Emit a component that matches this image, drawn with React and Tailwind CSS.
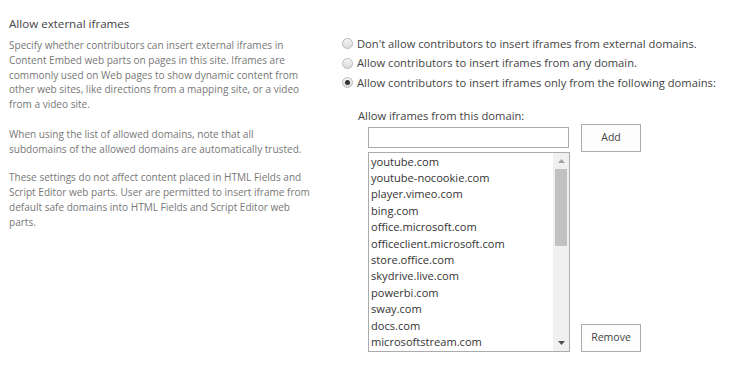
import React from "react";

const domains = [
  "youtube.com",
  "youtube-nocookie.com",
  "player.vimeo.com",
  "bing.com",
  "office.microsoft.com",
  "officeclient.microsoft.com",
  "store.office.com",
  "skydrive.live.com",
  "powerbi.com",
  "sway.com",
  "docs.com",
  "microsoftstream.com",
];

function Radio({ checked, label }) {
  return (
    <div className="flex items-center h-[19.5px]">
      <span className="flex items-center justify-center w-[11px] h-[11px] rounded-full border border-[#b9b9b9] bg-[linear-gradient(#f4f4f4,#dcdcdc)] mr-[4px] shrink-0">
        {checked && <span className="w-[5px] h-[5px] rounded-full bg-[#333]" />}
      </span>
      <span className="text-[#444] text-[11.2px] leading-[16px] whitespace-nowrap">{label}</span>
    </div>
  );
}

export default function App() {
  return (
    <div className="flex w-[735px] h-[383px] bg-white font-['Open_Sans',sans-serif] overflow-hidden">
      <div className="w-[333px] pl-[9px] pt-[15px] shrink-0">
        <div className="text-[#444] text-[11.6px] leading-[18px]">Allow external iframes</div>
        <div className="text-[#777] text-[10.05px] leading-[14.8px] mt-[5px]">
          <p>
            Specify whether contributors can insert external iframes in<br />
            Content Embed web parts on pages in this site. Iframes are<br />
            commonly used on Web pages to show dynamic content from<br />
            other web sites, like directions from a mapping site, or a video<br />
            from a video site.
          </p>
          <p className="mt-[14.8px]">
            When using the list of allowed domains, note that all<br />
            subdomains of the allowed domains are automatically trusted.
          </p>
          <p className="mt-[14px]">
            These settings do not affect content placed in HTML Fields and<br />
            Script Editor web parts. User are permitted to insert iframe from<br />
            default safe domains into HTML Fields and Script Editor web<br />
            parts.
          </p>
        </div>
      </div>
      <div className="pl-[9px] pt-[34px]">
        <Radio label="Don't allow contributors to insert iframes from external domains." />
        <Radio label="Allow contributors to insert iframes from any domain." />
        <Radio checked label="Allow contributors to insert iframes only from the following domains:" />
        <div className="pl-[16px] pt-[15px]">
          <div className="text-[#444] text-[11.2px] leading-[16px]">Allow iframes from this domain:</div>
          <div className="flex">
            <div className="flex flex-col pl-[10px] w-[221px]">
              <div className="h-[21px] w-[201px] border border-[#ababab] bg-white mt-[3px]" />
              <div className="flex w-[202px] h-[200px] border border-[#ababab] mt-[4px] bg-white">
                <div className="flex-1 pl-[2px] pt-[1px] overflow-hidden">
                  {domains.map((d) => (
                    <div key={d} className="text-[#333] text-[11.1px] leading-[16.4px] whitespace-nowrap">{d}</div>
                  ))}
                </div>
                <div className="w-[16px] bg-[#f0f0f0] flex flex-col items-center">
                  <div className="h-[16px] flex items-center justify-center">
                    <svg width="7" height="4" viewBox="0 0 7 4"><path d="M0 4 L3.5 0 L7 4 Z" fill="#a3a3a3" /></svg>
                  </div>
                  <div className="w-[12px] h-[77px] bg-[#c1c1c1]" />
                  <div className="flex-1" />
                  <div className="h-[16px] flex items-center justify-center">
                    <svg width="7" height="4" viewBox="0 0 7 4"><path d="M0 0 L3.5 4 L7 0 Z" fill="#505050" /></svg>
                  </div>
                </div>
              </div>
            </div>
            <div className="flex flex-col justify-between ml-[2px]">
              <button className="w-[60px] h-[28px] border border-[#ababab] bg-[#fdfdfd] text-[#444] text-[10.5px]">Add</button>
              <button className="w-[60px] h-[28px] border border-[#ababab] bg-[#fdfdfd] text-[#444] text-[10.5px]">Remove</button>
            </div>
          </div>
        </div>
      </div>
    </div>
  );
}
